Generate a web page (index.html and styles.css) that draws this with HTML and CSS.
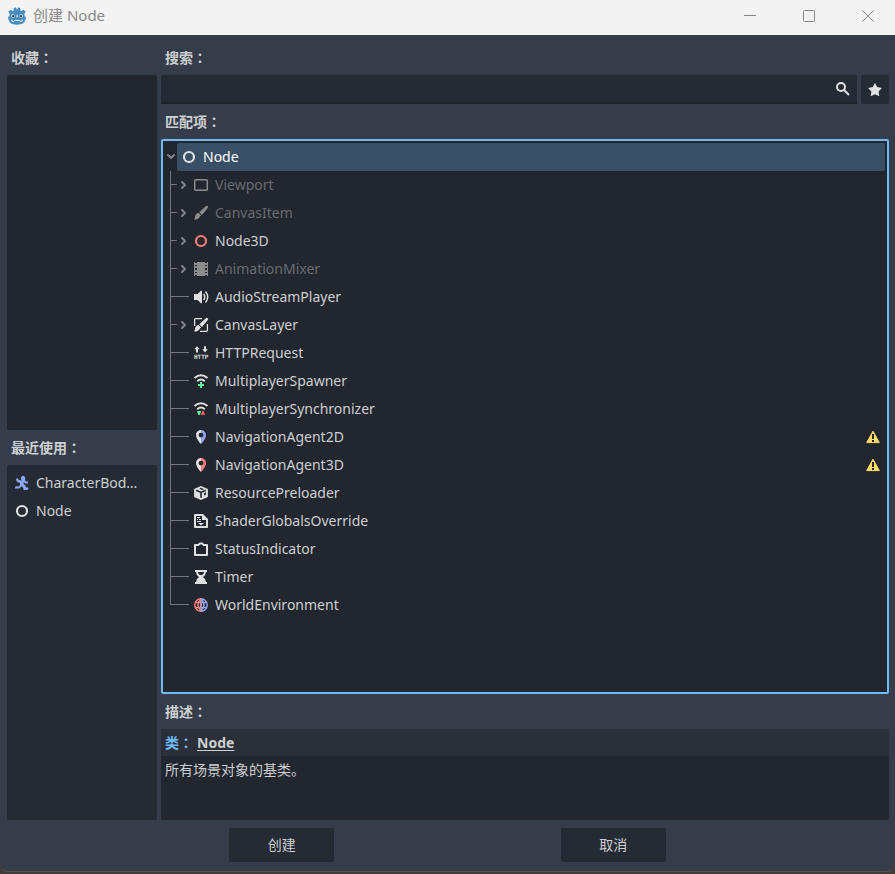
FILE: index.html
```html
<!DOCTYPE html>
<html lang="zh-CN">
<head>
<meta charset="utf-8">
<title>创建 Node</title>
<link rel="stylesheet" href="styles.css">
</head>
<body>
<svg class="defs" aria-hidden="true">
  <symbol id="node" viewBox="0 0 16 16"><circle cx="8" cy="8" r="5" fill="none" stroke="currentColor" stroke-width="2.200"/></symbol>
  <symbol id="chevron" viewBox="0 0 12 12"><path d="M4 3l3 3-3 3" fill="none" stroke="currentColor" stroke-width="2" stroke-linecap="round" stroke-linejoin="round"/></symbol>
  <symbol id="warning" viewBox="0 0 16 16"><path d="M8 2.2L14.3 13.6H1.7z" fill="#ffdd65" stroke="#ffdd65" stroke-width="1" stroke-linejoin="round"/><path d="M7 5h2v5H7zM7 11h2v2H7z" fill="#22262f"/></symbol>
</svg>
<main class="dialog">
  <header class="titlebar">
    <svg class="logo" viewBox="0 0 18 18" aria-hidden="true">
      <path d="M.3 4.800L2.500 2.800 4.300 4l1.500-.6L5.600 1.200 7.700.3l.9 1.900h.8L10.300.3l2.100.9-.2 2.200 1.500.6 1.800-1.200 2.200 2-1.200 1.800v3h1.300v3.200h-.7q-.4 4.900-8.100 4.900T.9 12.800H.2V9.600h1.300v-3z" fill="#478cbf"/>
      <circle cx="4.900" cy="9" r="1.700" fill="#fff"/><circle cx="13.100" cy="9" r="1.700" fill="#fff"/>
      <circle cx="5.100" cy="9.100" r="1.200" fill="#414042"/><circle cx="12.900" cy="9.100" r="1.200" fill="#414042"/>
      <path d="M9 8.300v1.700" stroke="#fff" stroke-width="1" stroke-linecap="round"/>
      <path d="M3.500 12.600l.5 1.500 2 .3.700-1.100 2.300.2 2.300-.2.700 1.100 2-.3.500-1.500" fill="none" stroke="#fff" stroke-width=".9"/>
    </svg>
    <h1>创建 Node</h1>
    <div class="window-controls">
      <button aria-label="最小化"><svg viewBox="0 0 12 12"><path d="M0 5.500h12"/></svg></button>
      <button aria-label="最大化"><svg viewBox="0 0 12 12"><rect x=".5" y=".5" width="11" height="11" rx="1"/></svg></button>
      <button aria-label="关闭"><svg viewBox="0 0 12 12"><path d="M.3.300l11.400 11.400M11.700.300L.300 11.700"/></svg></button>
    </div>
  </header>

  <div class="content">
    <aside class="sidebar">
      <h2>收藏<span lang="zh-TW">：</span></h2>
      <div class="panel favorites"></div>
      <h2>最近使用<span lang="zh-TW">：</span></h2>
      <ul class="panel recent">
        <li>
          <svg class="icon" viewBox="0 0 16 16" fill="#8da5f3" aria-hidden="true"><path d="M9 .8a2.700 2.700 0 0 0-1.200 4.700L4.800 5.100 3.700 3 1.800 4.200l1.500 3 2.700.6v1.700l-1 2-3.300-.2-1 2.200h4.800l2-2.300 1.700 1.600.3 2.200h3.800l1.200-1.300-.8-1.500-1.700.3-.5-2-1.900-1.500.2-1.900 1.500 1.500h2.700V6.600h-1.900l-1.300-1.500A2.700 2.700 0 0 0 9 .8z"/></svg>
          <span>CharacterBod…</span>
        </li>
        <li><svg class="icon" aria-hidden="true"><use href="#node"/></svg><span>Node</span></li>
      </ul>
    </aside>

    <section class="main">
      <h2><label for="search">搜索<span lang="zh-TW">：</span></label></h2>
      <div class="search-row">
        <div class="search-field">
          <input id="search" type="text">
          <svg class="icon" viewBox="0 0 16 16" fill="none" stroke="currentColor" stroke-width="2" aria-hidden="true"><circle cx="6" cy="6" r="4"/><path d="M9 9l5 5"/></svg>
        </div>
        <button class="favorite" aria-label="收藏"><svg class="icon" viewBox="0 0 16 16" aria-hidden="true"><path d="M8 1l2.200 4.100 4.700.9-3.300 3.400.7 4.800L8 12.200l-4.300 2 .7-4.800L1.100 6l4.700-.9z" fill="currentColor"/></svg></button>
      </div>
      <h2>匹配项<span lang="zh-TW">：</span></h2>
      <div class="tree">
        <div class="root">
          <button class="toggle open" aria-label="折叠"><svg><use href="#chevron"/></svg></button>
          <div class="selected"><svg class="icon" aria-hidden="true"><use href="#node"/></svg><span>Node</span></div>
        </div>
        <ul class="children">
          <li class="muted branch"><button class="toggle" aria-label="展开"><svg><use href="#chevron"/></svg></button>
            <svg class="icon" viewBox="0 0 16 16"><rect x="1.700" y="2.700" width="12.600" height="10.600" rx="1" fill="none" stroke="currentColor" stroke-width="1.500"/></svg><span>Viewport</span></li>
          <li class="muted branch"><button class="toggle" aria-label="展开"><svg><use href="#chevron"/></svg></button>
            <svg class="icon" viewBox="0 0 16 16" fill="currentColor"><path d="M12.800 1.200a1.300 1.300 0 0 1 2 1.900L9 9.900 6.200 7.200zM5.500 8l2.700 2.600q-.6.600-1.200.8Q5.500 14.800 1 14.500q1-1 1-2.800Q2.800 8.300 5.500 8z"/></svg><span>CanvasItem</span></li>
          <li class="branch"><button class="toggle" aria-label="展开"><svg><use href="#chevron"/></svg></button>
            <svg class="icon red"><use href="#node"/></svg><span>Node3D</span></li>
          <li class="muted branch"><button class="toggle" aria-label="展开"><svg><use href="#chevron"/></svg></button>
            <svg class="icon" viewBox="0 0 16 16"><path d="M1 1h1v1h2V1h8v1h2V1h1v14h-1v-1h-2v1H4v-1H2v1H1zM2 4v1h2V4zm0 3v2h2V7zm0 4v1h2v-1zM12 4v1h2V4zm0 3v2h2V7zm0 4v1h2v-1z" fill="currentColor" fill-rule="evenodd"/></svg><span>AnimationMixer</span></li>
          <li>
            <svg class="icon" viewBox="0 0 16 16"><path d="M9 1.800v12.400H8L4.500 11H1V5h3.500L8 1.800z" fill="currentColor"/><path d="M10.700 5q2 3 0 6M12.500 2.500q4.400 5.500 0 11" fill="none" stroke="currentColor" stroke-width="1.500"/></svg><span>AudioStreamPlayer</span></li>
          <li class="branch"><button class="toggle" aria-label="展开"><svg><use href="#chevron"/></svg></button>
            <svg class="icon" viewBox="0 0 16 16"><path d="M9 1.600H2.700A1.100 1.100 0 0 0 1.600 2.700V9M7 14.400h6.300a1.100 1.100 0 0 0 1.100-1.100V7" fill="none" stroke="currentColor" stroke-width="1.300"/><path d="M12.800 1.200a1.300 1.300 0 0 1 2 1.900L9 9.900 6.200 7.200zM5.500 8l2.700 2.600q-.6.600-1.200.8Q5.500 14.800 1 14.500q1-1 1-2.800Q2.800 8.300 5.500 8z" fill="currentColor"/></svg><span>CanvasLayer</span></li>
          <li>
            <svg class="icon" viewBox="0 0 16 16"><path d="M4 1.200L1.200 4.200H3V7.500h2V4.200h1.800zM11 1.200v3H9.200L12 7.500l2.800-3.300H13v-3z" fill="currentColor"/><text class="icon-text" x="1" y="14">HTTP</text></svg><span>HTTPRequest</span></li>
          <li>
            <svg class="icon" viewBox="0 0 16 16" fill="none" stroke="currentColor" stroke-width="2"><path d="M1.500 5q6.500-5.500 13 0M4.200 8.200q3.800-3.400 7.600 0"/><path d="M8 9v6M5 12h6" stroke="#5fff97"/></svg><span>MultiplayerSpawner</span></li>
          <li>
            <svg class="icon" viewBox="0 0 16 16"><path d="M1.500 5q6.500-5.500 13 0M4.200 8.200q3.800-3.400 7.600 0" fill="none" stroke="currentColor" stroke-width="2"/><path d="M4 10h4.200L6.800 14H5.300z" fill="#5fff97"/><path d="M7.800 14H12l-1.300-4H9.200z" fill="#ff5f5f"/></svg><span>MultiplayerSynchronizer</span></li>
          <li>
            <svg class="icon" viewBox="0 0 16 16"><path d="M8 1a5 5 0 0 0-5 5q0 4 5 9V8.500a2.400 2.400 0 0 1 0-4.800z" fill="currentColor"/><path d="M8 1a5 5 0 0 1 5 5q0 4-5 9V8.500a2.400 2.400 0 0 0 0-4.800z" fill="#8da5f3"/></svg><span>NavigationAgent2D</span><svg class="icon warning" role="img" aria-label="警告"><use href="#warning"/></svg></li>
          <li>
            <svg class="icon" viewBox="0 0 16 16"><path d="M8 1a5 5 0 0 0-5 5q0 4 5 9V8.500a2.400 2.400 0 0 1 0-4.800z" fill="currentColor"/><path d="M8 1a5 5 0 0 1 5 5q0 4-5 9V8.500a2.400 2.400 0 0 0 0-4.800z" fill="#fc7f7f"/></svg><span>NavigationAgent3D</span><svg class="icon warning" role="img" aria-label="警告"><use href="#warning"/></svg></li>
          <li>
            <svg class="icon" viewBox="0 0 16 16"><path d="M8 .9l6.900 3.200v7.800L8 15.100l-6.900-3.200V4.100z" fill="currentColor"/><path d="M3.200 5.200L8 7.400l4.800-2.200M8 7.400v5.400" fill="none" stroke="#22262f" stroke-width="1.600"/><path d="M6.200 3.600L8 2.800l3 1.400-1.800.8zM11 8.300l2-1v2.200l-2 1z" fill="#22262f"/></svg><span>ResourcePreloader</span></li>
          <li>
            <svg class="icon" viewBox="0 0 16 16"><path d="M2 1h8l5 5v8a1 1 0 0 1-1 1H2a1 1 0 0 1-1-1V2a1 1 0 0 1 1-1zm1 2v10h10V7H9V3zM4 4h3v1H4zm0 2h1v1H4zm2 0h2v1H6zM4 8h4v1H4zM5 10h6l-3 2.500z" fill="currentColor" fill-rule="evenodd"/></svg><span>ShaderGlobalsOverride</span></li>
          <li>
            <svg class="icon" viewBox="0 0 16 16"><path d="M2 4h3.500l1.200-1.500h2.600L10.500 4H14v10H2z" fill="none" stroke="currentColor" stroke-width="2" stroke-linejoin="round"/></svg><span>StatusIndicator</span></li>
          <li>
            <svg class="icon" viewBox="0 0 16 16"><path d="M2 1h12v2h-1q0 3-3 5 3 2 3 5h1v2H2v-2h1q0-3 3-5-3-2-3-5H2zm3 2q0 2 2 3h2q2-1 2-3z" fill="currentColor" fill-rule="evenodd"/></svg><span>Timer</span></li>
          <li>
            <svg class="icon" viewBox="0 0 16 16" fill="none" stroke-width="1.400"><path d="M8 1.800a6.200 6.200 0 0 0 0 12.400M8 1.800Q2 8 8 14.200M2 5.500h6M2 10.500h6" stroke="#fc7f7f"/><path d="M8 1.800a6.200 6.200 0 0 1 0 12.400M8 1.800Q14 8 8 14.200M8 5.500h6M8 10.500h6" stroke="#8da5f3"/><path d="M7.500 1.500v13" stroke="#fc7f7f" stroke-width="1"/><path d="M8.500 1.500v13" stroke="#8da5f3" stroke-width="1"/></svg><span>WorldEnvironment</span></li>
        </ul>
      </div>
      <h2>描述<span lang="zh-TW">：</span></h2>
      <article class="description">
        <p class="class-name"><span>类<span lang="zh-TW">：</span></span><a href="#">Node</a></p>
        <p class="summary">所有场景对象的基类。</p>
      </article>
    </section>
  </div>

  <footer class="actions">
    <button class="create">创建</button>
    <button class="cancel">取消</button>
  </footer>
</main>
</body>
</html>
```
FILE: styles.css
```css
* {
  box-sizing: border-box;
}

body {
  margin: 0;
  background: #3f3b3a;
  color: #cdcfd2;
  font: 14px/20px "Noto Sans", "Noto Sans CJK SC", sans-serif;
}

:lang(zh-TW) {
  font-family: "Noto Sans CJK TC", sans-serif;
  line-height: 1;
}

h1, h2, p, ul {
  margin: 0;
  padding: 0;
}

ul {
  list-style: none;
}

button {
  padding: 0;
  border: 0;
  background: none;
  color: inherit;
  font: inherit;
}

svg {
  display: block;
}

.defs {
  position: absolute;
  width: 0;
  height: 0;
}

.dialog {
  display: flex;
  flex-direction: column;
  min-height: calc(100vh - 2px);
  border-bottom: 1px solid #55524f;
  border-radius: 0 0 8px 8px;
  background: #363d4a;
}

.titlebar {
  display: flex;
  align-items: center;
  height: 35px;
  padding-left: 8px;
  background: #f3f3f3;
  color: #8a8a8a;
}

.logo {
  width: 18px;
  height: 18px;
  margin: 0 7px 3px 0;
}

.titlebar h1 {
  padding-bottom: 6px;
  font-size: 15px;
  font-weight: 400;
}

.window-controls {
  display: flex;
  gap: 5px;
  margin-left: auto;
}

.window-controls button {
  display: grid;
  place-items: center;
  width: 54px;
  height: 35px;
  padding-bottom: 3px;
}

.window-controls svg {
  width: 12px;
  height: 12px;
  fill: none;
  stroke: #858585;
}

.content {
  display: flex;
  flex: 1;
  gap: 4px;
  padding: 0 6px 0 7px;
}

.sidebar {
  display: grid;
  grid-template-rows: auto 1fr auto 1fr;
  width: 150px;
}

.main {
  display: flex;
  flex: 1;
  flex-direction: column;
  min-width: 0;
}

h2 {
  padding: 8px 4px 7px;
  font-size: 14px;
  font-weight: 700;
}

.content h2:first-child {
  padding: 13px 4px 7px;
}

.panel {
  border-radius: 2px;
}

.favorites {
  background: #22262f;
}

.recent {
  padding: 4px 7px;
  background: #252b34;
}

.recent li {
  display: flex;
  align-items: center;
  gap: 6px;
  height: 28px;
}

.icon {
  flex: none;
  width: 16px;
  height: 16px;
  color: #e0e0e0;
}

.icon-text {
  fill: currentColor;
  font: 700 6px "DejaVu Sans Mono", monospace;
}

.red {
  color: #fc7f7f;
}

.search-row {
  display: flex;
  gap: 4px;
  height: 29px;
}

.search-field {
  display: flex;
  flex: 1;
  align-items: center;
  padding-right: 6px;
  border-bottom: 2px solid #1d2229;
  border-radius: 2px 2px 0 0;
  background: #252b34;
}

.search-field input {
  flex: 1;
  min-width: 0;
  padding: 0 4px;
  border: 0;
  outline: 0;
  background: none;
  color: inherit;
  font: inherit;
}

.favorite {
  display: grid;
  place-items: center;
  width: 28px;
  border-radius: 2px;
  background: #252b34;
}

.tree {
  flex: 1;
  padding: 2px;
  border: 2px solid #70bafa;
  border-radius: 2px;
  background: #22262f;
}

.root {
  display: flex;
  align-items: center;
}

.toggle {
  width: 12px;
  height: 12px;
  color: #808389;
}

.toggle svg {
  width: 12px;
  height: 12px;
}

.open svg {
  transform: rotate(90deg);
}

.selected {
  display: flex;
  flex: 1;
  align-items: center;
  gap: 6px;
  height: 28px;
  padding-left: 4px;
  border-radius: 2px;
  background: #394f65;
  color: #fff;
}

.children {
  margin-left: 5px;
}

.children li {
  position: relative;
  display: flex;
  align-items: center;
  gap: 6px;
  height: 28px;
  padding-left: 23px;
}

.children .branch {
  padding-left: 8px;
}

.branch .icon {
  margin-left: -3px;
}

.children li::before {
  position: absolute;
  top: 0;
  left: 0;
  width: 1px;
  height: 100%;
  background: #73767c;
  content: "";
}

.children li:last-child::before {
  height: 50%;
}

.children li::after {
  position: absolute;
  top: 13px;
  left: 0;
  width: 19px;
  height: 1px;
  background: #73767c;
  content: "";
}

.children .branch::after {
  width: 7px;
}

.muted {
  color: #686b70;
}

.muted .icon {
  color: #8c8c8c;
}

.children .warning {
  margin: 0 4px 0 auto;
}

.description {
  height: 91px;
  overflow: hidden;
  border-radius: 2px;
  background: #22262f;
}

.class-name {
  display: flex;
  gap: 4px;
  padding: 4px 4px 3px;
  background: #2b2f38;
  color: #70bafa;
  font-weight: 700;
}

.class-name a {
  color: #cdcfd2;
  text-underline-offset: 2px;
}

.summary {
  padding: 4px;
}

.actions {
  display: grid;
  grid-template-columns: 1fr 105px 1fr 105px 1fr;
  gap: 4px;
  padding: 8px 7px 9px;
}

.actions button {
  height: 34px;
  border-radius: 2px;
  background: #252b34;
}

.create {
  grid-column: 2;
}

.cancel {
  grid-column: 4;
}
```
